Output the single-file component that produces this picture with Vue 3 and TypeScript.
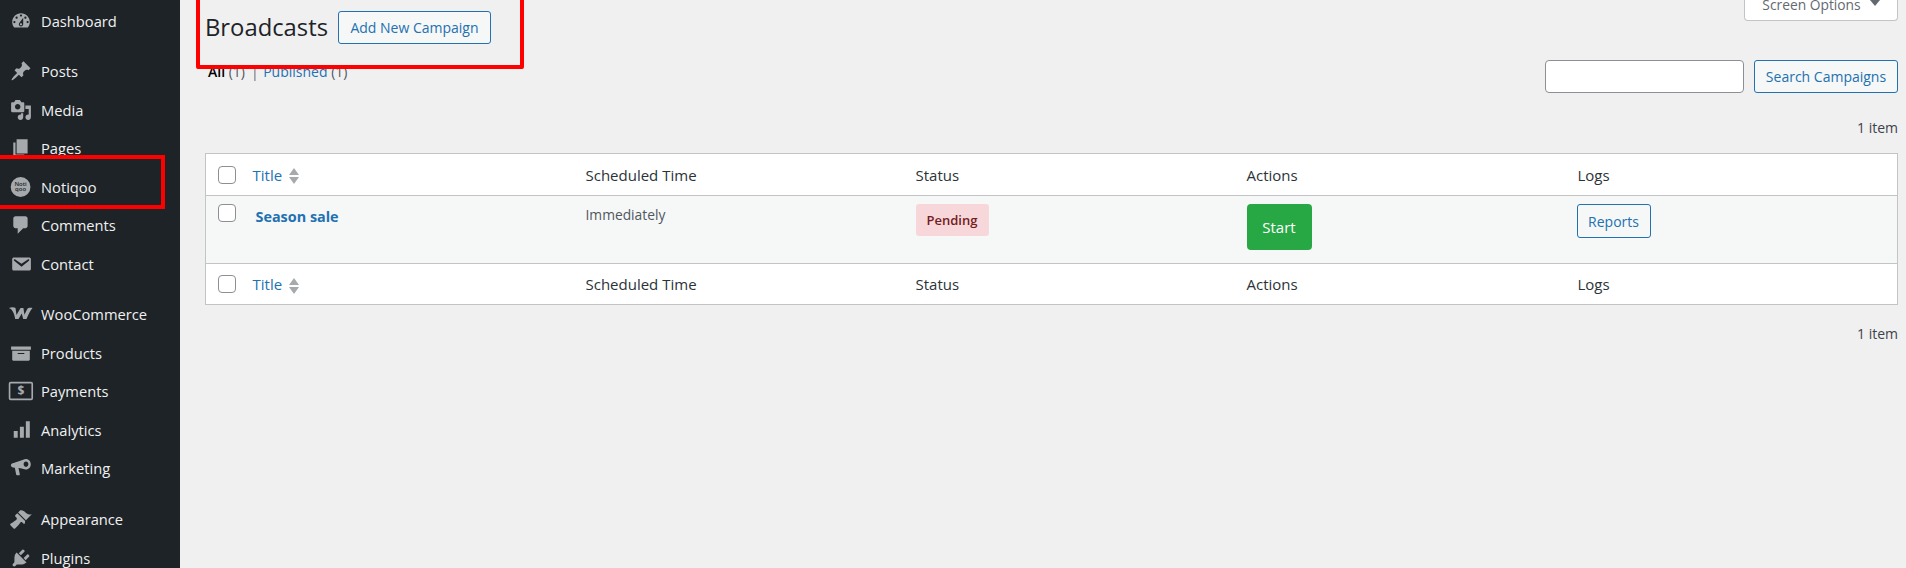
<script setup lang="ts">
interface MenuItem { label: string; d?: string; kind?: string; gap?: boolean }
const menu: MenuItem[] = [
  { label: 'Dashboard', d: 'M3.76 16h12.48c1.1-1.37 1.76-3.11 1.76-5 0-4.42-3.58-8-8-8s-8 3.58-8 8c0 1.89.66 3.63 1.76 5zM10 4c.55 0 1 .45 1 1s-.45 1-1 1-1-.45-1-1 .45-1 1-1zM6 6c.55 0 1 .45 1 1s-.45 1-1 1-1-.45-1-1 .45-1 1-1zm8 0c.55 0 1 .45 1 1s-.45 1-1 1-1-.45-1-1 .45-1 1-1zm-5.37 5.55L12 7v6c0 1.1-.9 2-2 2s-2-.9-2-2c0-.57.24-1.08.63-1.45zM4 10c.55 0 1 .45 1 1s-.45 1-1 1-1-.45-1-1 .45-1 1-1zm12 0c.55 0 1 .45 1 1s-.45 1-1 1-1-.45-1-1 .45-1 1-1zm-5 3c0-.55-.45-1-1-1s-1 .45-1 1 .45 1 1 1 1-.45 1-1z' },
  { label: 'Posts', gap: true, d: 'M10.44 3.02l1.82-1.82 6.36 6.35-1.83 1.82c-1.05-.68-2.48-.57-3.41.36l-.75.75c-.92.93-1.04 2.35-.35 3.41l-1.83 1.82-2.41-2.41-2.8 2.79c-.42.42-3.38 2.71-3.8 2.29s1.86-3.39 2.28-3.81l2.79-2.79L4.1 9.36l1.83-1.82c1.05.69 2.48.57 3.4-.36l.75-.75c.93-.92 1.05-2.35.36-3.41z' },
  { label: 'Media', d: 'M13 11V4c0-.55-.45-1-1-1h-1.67L9 1H5L3.67 3H2c-.55 0-1 .45-1 1v7c0 .55.45 1 1 1h10c.55 0 1-.45 1-1zM7 4.5c1.38 0 2.5 1.12 2.5 2.5S8.38 9.5 7 9.5 4.5 8.38 4.5 7 5.62 4.5 7 4.5zM14 6h5v10.5c0 1.38-1.12 2.5-2.5 2.5S14 17.88 14 16.5s1.12-2.5 2.5-2.5c.17 0 .34.02.5.05V9h-3V6zm-4 8.05V13h2v3.5c0 1.38-1.12 2.5-2.5 2.5S7 17.88 7 16.5 8.12 14 9.5 14c.17 0 .34.02.5.05z' },
  { label: 'Pages', d: 'M6 15V2h10v13H6zm-1 1h8v2H3V5h2v11z' },
  { label: 'Notiqoo', kind: 'notiqoo' },
  { label: 'Comments', d: 'M5 2h9c1.1 0 2 .9 2 2v7c0 1.1-.9 2-2 2h-2l-5 5v-5H5c-1.1 0-2-.9-2-2V4c0-1.1.9-2 2-2z' },
  { label: 'Contact', d: 'M3.87 4h13.25C18.37 4 19 4.59 19 5.79v8.42c0 1.19-.63 1.79-1.88 1.79H3.87c-1.25 0-1.88-.6-1.88-1.79V5.79c0-1.2.63-1.79 1.88-1.79zm6.62 8.6l6.74-5.53c.24-.2.43-.66.13-1.07-.29-.41-.82-.42-1.17-.17l-5.7 3.86L4.8 5.83c-.35-.25-.88-.24-1.17.17-.3.41-.11.87.13 1.07z' },
  { label: 'WooCommerce', gap: true, d: 'M-1 4.5c2.2-1 4.8-1 6 0l.9 6.4L9.6 4.5h2.6l.9 6.2 2.6-5.2c.6-1 2-1.4 4.8-1-2 2-3.5 5.5-5.5 10h-3L10.7 9.5l-3 5H4.7C4.2 11 3 6-1 4.5z' },
  { label: 'Products', d: 'M19 4v3H1V4h18zM2 8h16v8c0 .55-.45 1-1 1H3c-.55 0-1-.45-1-1V8zm5 3h6v-1H7v1z' },
  { label: 'Payments', kind: 'payments' },
  { label: 'Analytics', d: 'M18 2v15h-3.6V2H18zM12.6 7v10H9V7h3.6zM7 11v6H3.4v-6H7z' },
  { label: 'Marketing', d: 'M14.5 1.8c2.5 0 4.4 2.1 4.4 4.7s-1.9 4.8-4.4 4.8c-1.5 0-4.5-1.2-6.8-1.4l1.2 5.8c.1.6-.2 1-.7 1H6.4c-.4 0-.7-.3-.8-.7L4.4 9.8 2.6 9.5C1.4 9.3.8 8.6.8 7.6s.6-1.7 1.8-2L12 2.6c.8-.5 1.6-.8 2.5-.8zm0 2.4c-1.2 0-2.1 1-2.1 2.3s.9 2.4 2.1 2.4 2.2-1.1 2.2-2.4-1-2.3-2.2-2.3z' },
  { label: 'Appearance', gap: true, d: 'M14.48 11.06L7.41 3.99l1.5-1.5c.5-.56 2.3-.47 3.51.32 1.21.8 1.43 1.28 2.91 2.1 1.18.64 2.45 1.26 4.45.85zm-.71.71L6.7 4.7 4.93 6.47c-.39.39-.39 1.02 0 1.41l1.06 1.06c.39.39.39 1.03 0 1.42-.6.6-1.43 1.11-2.21 1.69-.35.26-.7.53-1.01.84L.4 14.37c-.39.39-.39 1.03 0 1.42l2.83 2.83c.39.39 1.03.39 1.42 0l2.47-2.47c.31-.31.58-.66.84-1.01.58-.78 1.09-1.61 1.69-2.21.39-.39 1.02-.39 1.41 0l1.06 1.06c.39.39 1.02.39 1.41 0z' },
  { label: 'Plugins', d: 'M13.11 4.36L9.87 7.6 8 5.73l3.24-3.24c.35-.34 1.05-.2 1.56.32.52.51.66 1.21.31 1.55zm-8 1.77l.91-1.12 9.01 9.01-1.19.84c-.71.71-2.63 1.16-3.82 1.16H6.14L4.9 17.26c-.59.59-1.54.59-2.12 0-.59-.58-.59-1.53 0-2.12l1.24-1.24v-3.88c0-1.13.4-3.19 1.09-3.89zm7.26 3.97l3.24-3.24c.34-.35 1.04-.21 1.55.31.52.51.66 1.21.31 1.55l-3.24 3.25z' },
]
</script>

<template>
  <div class="page">
    <aside class="side">
      <a v-for="m in menu" :key="m.label" class="item" :class="{ gap: m.gap }">
        <svg class="ico" viewBox="0 0 20 20" width="22" height="22" aria-hidden="true">
          <path v-if="m.d" :d="m.d" fill="#a7aaad" fill-rule="evenodd" />
          <g v-else-if="m.kind === 'notiqoo'">
            <circle cx="9.6" cy="10" r="9" fill="#a7aaad" />
            <text x="9.6" y="9.4" text-anchor="middle" class="nq">Noti</text>
            <text x="9.6" y="14" text-anchor="middle" class="nq">qoo</text>
          </g>
          <g v-else>
            <rect x="-0.4" y="2.4" width="20.6" height="15.2" rx="1" fill="none" stroke="#a7aaad" stroke-width="1.5" />
            <text x="9.9" y="14" text-anchor="middle" class="dollar">$</text>
          </g>
        </svg>
        <span>{{ m.label }}</span>
      </a>
    </aside>

    <main class="main">
      <div class="top">
        <div class="heading">
          <h1>Broadcasts</h1>
          <a class="btn add">Add New Campaign</a>
        </div>
        <div class="screen"><span>Screen Options</span><i class="caret"></i></div>
      </div>

      <div class="filter">
        <div class="subs"><b>All</b> <em>(1)</em><span class="sep">|</span><a>Published</a> <em>(1)</em></div>
        <div class="search">
          <input class="field" type="text" />
          <a class="btn srch">Search Campaigns</a>
        </div>
      </div>

      <div class="count first">1 item</div>

      <table class="tbl">
        <colgroup>
          <col class="c0" /><col class="c1" /><col class="c2" /><col class="c3" /><col class="c4" /><col />
        </colgroup>
        <thead>
          <tr>
            <td><span class="cb"></span></td>
            <td><a class="sort">Title</a><span class="arrows"><i class="up"></i><i class="down"></i></span></td>
            <td>Scheduled Time</td><td>Status</td><td>Actions</td><td>Logs</td>
          </tr>
        </thead>
        <tbody>
          <tr>
            <td><span class="cb"></span></td>
            <td><a class="name">Season sale</a></td>
            <td class="sched">Immediately</td>
            <td><span class="pending">Pending</span></td>
            <td><a class="start">Start</a></td>
            <td><a class="btn reports">Reports</a></td>
          </tr>
        </tbody>
        <tfoot>
          <tr>
            <td><span class="cb"></span></td>
            <td><a class="sort">Title</a><span class="arrows"><i class="up"></i><i class="down"></i></span></td>
            <td>Scheduled Time</td><td>Status</td><td>Actions</td><td>Logs</td>
          </tr>
        </tfoot>
      </table>

      <div class="count last">1 item</div>
    </main>

    <div class="mark mark-menu"></div>
    <div class="mark mark-head"></div>
  </div>
</template>

<style>
html, body { margin: 0; background: #f0f0f1; overflow: hidden; }
</style>

<style scoped>
.page {
  position: relative;
  display: flex;
  width: 1906px;
  height: 568px;
  overflow: hidden;
  background: #f0f0f1;
  font-family: "Open Sans", "Noto Sans", sans-serif;
  font-size: 14px;
  color: #3c434a;
}
.side {
  flex: 0 0 180px;
  background: #1d2327;
  display: flex;
  flex-direction: column;
  padding-top: 1.5px;
}
.item {
  height: 38.5px;
  flex: none;
  display: flex;
  align-items: center;
  gap: 9px;
  padding-left: 10px;
  color: #f0f0f1;
  font-size: 14.7px;
}
.item.gap { margin-top: 12.1px; }
.ico { flex: none; overflow: visible; }
.nq { font-size: 5.4px; font-weight: 600; fill: #1d2327; font-family: "Open Sans", sans-serif; }
.dollar { font-size: 11px; font-weight: 700; fill: #a7aaad; font-family: "Open Sans", sans-serif; }

.main { flex: 1; padding-left: 25px; padding-right: 8px; min-width: 0; }
.top { display: flex; justify-content: space-between; align-items: flex-start; height: 60px; }
.heading { display: flex; align-items: center; gap: 10px; margin-top: 11px; }
h1 { margin: 0; font-size: 23.8px; font-weight: 400; color: #1d2327; line-height: 33px; }
.btn {
  box-sizing: border-box;
  display: inline-flex;
  align-items: center;
  justify-content: center;
  border: 1px solid #2271b1;
  border-radius: 3px;
  background: #f6f7f7;
  color: #2271b1;
  font-size: 14px;
}
.add { width: 153px; height: 33px; }
.screen {
  box-sizing: border-box;
  width: 154px;
  height: 21px;
  background: #fff;
  border: 1px solid #c3c4c7;
  border-top: 0;
  border-radius: 0 0 4px 4px;
  display: flex;
  align-items: flex-end;
  justify-content: center;
  gap: 9px;
  color: #646970;
  font-size: 13.8px;
  line-height: 24px;
  overflow: hidden;
  padding-bottom: 3px;
}
.caret {
  width: 0; height: 0;
  border-left: 5px solid transparent;
  border-right: 5px solid transparent;
  border-top: 6px solid #646970;
  margin-bottom: 11px;
}
.filter { display: flex; justify-content: space-between; align-items: flex-start; height: 33px; }
.subs { color: #50575e; line-height: 24px; margin-left: 3px; font-size: 14px; }
.subs b { color: #000; font-weight: 600; }
.subs a { color: #2271b1; }
.subs em { font-style: normal; color: #50575e; }
.sep { margin: 0 4.5px 0 6px; color: #646970; }
.search { display: flex; gap: 10px; }
.field {
  box-sizing: border-box;
  width: 199px;
  height: 33px;
  border: 1px solid #8c8f94;
  border-radius: 4px;
  background: #fff;
  padding: 0;
  outline: none;
}
.srch { width: 144px; height: 33px; }
.count { text-align: right; color: #3c434a; line-height: 20px; }
.count.first { margin-top: 25px; margin-bottom: 15px; }
.count.last { margin-top: 19px; }

.tbl {
  width: 1693px;
  table-layout: fixed;
  border-collapse: collapse;
  background: #fff;
  border: 1px solid #c3c4c7;
  color: #2c3338;
  font-size: 15px;
}
.c0 { width: 47px; }
.c1 { width: 333px; }
.c2 { width: 330px; }
.c3 { width: 331px; }
.c4 { width: 331px; }
td { padding: 0; vertical-align: middle; }
thead td { height: 41px; }
tfoot td { height: 40px; }
thead tr { border-bottom: 1px solid #c3c4c7; }
tfoot tr { border-top: 1px solid #c3c4c7; }
tbody tr { background: #f6f7f7; height: 68px; }
tbody td { vertical-align: top; padding-top: 8px; }
.cb {
  display: block;
  box-sizing: border-box;
  width: 18px;
  height: 18px;
  margin-left: 12px;
  background: #fff;
  border: 1px solid #8c8f94;
  border-radius: 4px;
}
.sort { color: #2271b1; }
.arrows { display: inline-flex; flex-direction: column; gap: 2px; margin-left: 7px; vertical-align: middle; }
.up, .down { width: 0; height: 0; border-left: 5px solid transparent; border-right: 5px solid transparent; }
.up { border-bottom: 7px solid #a7aaad; }
.down { border-top: 7px solid #a7aaad; }
.name { display: block; margin-left: 3px; margin-top: 3px; color: #2271b1; font-weight: 700; font-size: 14.4px; line-height: 20px; }
.sched { color: #50575e; font-size: 13.8px; line-height: 22px; }
.pending {
  display: inline-flex;
  align-items: center;
  justify-content: center;
  width: 73px;
  height: 32px;
  background: #f8d7da;
  border-radius: 3px;
  color: #721c24;
  font-size: 13px;
  font-weight: 600;
}
.start {
  display: flex;
  align-items: center;
  justify-content: center;
  width: 65px;
  height: 46px;
  background: #28a745;
  border-radius: 4px;
  color: #fff;
  font-size: 15px;
}
.reports { width: 74px; height: 34px; margin-left: -1px; }
.mark { position: absolute; border: 4px solid #f00; box-sizing: border-box; pointer-events: none; }
.mark-menu { left: -4px; top: 155px; width: 169px; height: 54px; }
.mark-head { left: 196px; top: -6px; width: 328px; height: 75px; border-radius: 2px; }
</style>
